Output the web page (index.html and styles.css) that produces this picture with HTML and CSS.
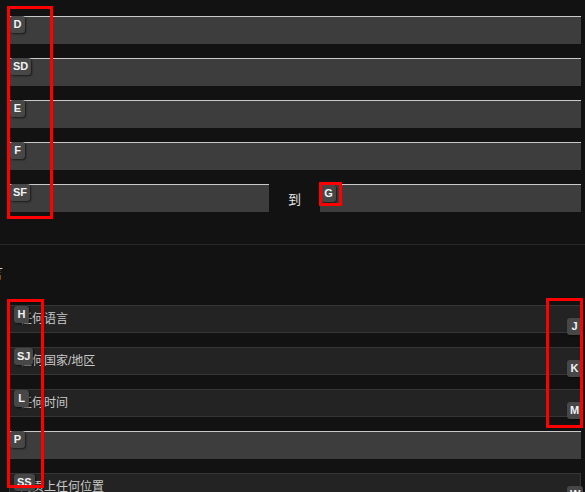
FILE: index.html
```html
<!DOCTYPE html>
<html lang="zh">
<head>
<meta charset="utf-8">
<link rel="stylesheet" href="styles.css">
</head>
<body>
<div class="page">
  <section class="group top">
    <div class="row"><div class="field"></div><span class="hint hl">D</span></div>
    <div class="row"><div class="field"></div><span class="hint hl">SD</span></div>
    <div class="row"><div class="field"></div><span class="hint hl">E</span></div>
    <div class="row"><div class="field"></div><span class="hint hl">F</span></div>
    <div class="row range">
      <div class="cell left"><div class="field"></div><span class="hint hl">SF</span></div>
      <span class="to">到</span>
      <div class="cell right"><div class="field"></div><span class="hint hg">G</span></div>
    </div>
  </section>
  <hr class="divider">
  <h2 class="heading">语言</h2>
  <section class="group bottom">
    <div class="row"><div class="select">任何语言</div><span class="hint hs">H</span><span class="hint hr">J</span></div>
    <div class="row"><div class="select">任何国家/地区</div><span class="hint hs">SJ</span><span class="hint hr">K</span></div>
    <div class="row"><div class="select">任何时间</div><span class="hint hs">L</span><span class="hint hr">M</span></div>
    <div class="row"><div class="field"></div><span class="hint hl">P</span></div>
    <div class="row"><div class="select">网页上任何位置</div><span class="hint hs">SS</span><span class="hint hr">W</span></div>
  </section>
  <div class="mark m1"></div>
  <div class="mark m2"></div>
  <div class="mark m3"></div>
  <div class="mark m4"></div>
</div>
</body>
</html>
```
FILE: styles.css
```css
html, body {
  margin: 0;
  padding: 0;
  background: #121212;
  overflow: hidden;
}
body {
  width: 585px;
  height: 492px;
  font-family: "Liberation Sans", "Noto Sans CJK SC", sans-serif;
  color: #ddd;
}
.page {
  position: relative;
  padding-top: 16px;
}
.group {
  padding-left: 9px;
  width: 572px;
}
.row {
  position: relative;
  margin-bottom: 14px;
}
.field {
  box-sizing: border-box;
  height: 28px;
  background: #3d3d3d;
  border-top: 1px solid #c9c9c9;
}
.range {
  display: flex;
  align-items: center;
}
.cell {
  position: relative;
}
.cell.left { width: 260px; }
.cell.right { width: 261px; }
.to {
  width: 51px;
  text-align: center;
  font-size: 13px;
  color: #e6e6e6;
  padding-top: 1px;
}
.divider {
  margin: 32px 0 0 0;
  border: 0;
  border-top: 1px solid #2a2a2a;
  height: 0;
}
.heading {
  margin: 19px 0 23px -27px;
  font-size: 15px;
  font-weight: normal;
  line-height: 18px;
  color: #cfcfcf;
  white-space: nowrap;
}
.select {
  box-sizing: border-box;
  height: 28px;
  background: #232323;
  border: 1px solid #363636;
  padding-left: 10px;
  font-size: 12px;
  line-height: 26px;
  color: #c8c8c8;
}
.hint {
  position: absolute;
  box-sizing: border-box;
  height: 17px;
  min-width: 15px;
  padding: 0 3px;
  background: #474747;
  border-radius: 3px;
  box-shadow: 1px 1px 2px rgba(0, 0, 0, 0.6);
  font-family: "Liberation Sans", sans-serif;
  font-size: 11px;
  font-weight: bold;
  line-height: 17px;
  color: #f2f2f2;
  text-align: center;
}
.hl { left: 1px; top: 0; }
.hg { left: 1px; top: 1px; }
.hs { left: 5px; top: 1px; }
.hr { left: 558px; top: 13px; }
.mark {
  position: absolute;
  box-sizing: border-box;
  border: 3px solid #ff0000;
}
.m1 { left: 7px; top: 6px; width: 46px; height: 213px; }
.m2 { left: 319px; top: 182px; width: 23px; height: 24px; }
.m3 { left: 7px; top: 299px; width: 37px; height: 189px; }
.m4 { left: 546px; top: 298px; width: 37px; height: 130px; }
```
